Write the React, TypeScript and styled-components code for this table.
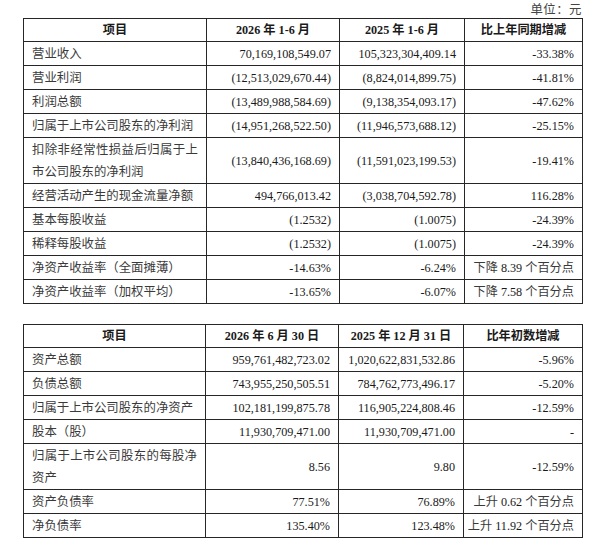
import React from "react";
import styled, { createGlobalStyle } from "styled-components";

const Global = createGlobalStyle`
  html, body { margin: 0; padding: 0; background: #ffffff; }
  body { font-family: "Liberation Serif", "Noto Sans CJK SC", serif; color: #1a1a1a; }
`;

const Page = styled.div`
  width: 600px;
  box-sizing: border-box;
  padding: 2px 18px 0 23px;
  display: flex;
  flex-direction: column;
`;

const Unit = styled.div`
  text-align: right;
  font-size: 12.4px;
  line-height: 16px;
  color: #444;
  letter-spacing: 0.5px;
`;

const Table = styled.table<{ $gap?: number }>`
  width: 559px;
  border-collapse: collapse;
  table-layout: fixed;
  margin-top: ${(p) => p.$gap ?? 0}px;
  font-size: 12.2px;
`;

const Th = styled.th`
  border: 1px solid #262626;
  padding: 1px 4px 0;
  line-height: 21px;
  font-weight: bold;
  text-align: center;
  color: #1a1a1a;
  white-space: nowrap;
`;

const Label = styled.td`
  border: 1px solid #262626;
  padding: 1px 8px 0;
  line-height: 22px;
  font-size: 12.4px;
  text-align: justify;
  color: #3a3a3a;
`;

const Num = styled.td<{ $tight?: boolean }>`
  border: 1px solid #262626;
  padding: 1px 8px 0 ${(p) => (p.$tight ? 2 : 4)}px;
  line-height: 22px;
  text-align: right;
  white-space: nowrap;
  color: #1a1a1a;
`;

const Cjk = styled.span`
  color: #3a3a3a;
`;

type Row = [string, string, string, string];

const incomeRows: Row[] = [
  ["营业收入", "70,169,108,549.07", "105,323,304,409.14", "-33.38%"],
  ["营业利润", "(12,513,029,670.44)", "(8,824,014,899.75)", "-41.81%"],
  ["利润总额", "(13,489,988,584.69)", "(9,138,354,093.17)", "-47.62%"],
  ["归属于上市公司股东的净利润", "(14,951,268,522.50)", "(11,946,573,688.12)", "-25.15%"],
  ["扣除非经常性损益后归属于上市公司股东的净利润", "(13,840,436,168.69)", "(11,591,023,199.53)", "-19.41%"],
  ["经营活动产生的现金流量净额", "494,766,013.42", "(3,038,704,592.78)", "116.28%"],
  ["基本每股收益", "(1.2532)", "(1.0075)", "-24.39%"],
  ["稀释每股收益", "(1.2532)", "(1.0075)", "-24.39%"],
  ["净资产收益率（全面摊薄）", "-14.63%", "-6.24%", "下降 8.39 个百分点"],
  ["净资产收益率（加权平均）", "-13.65%", "-6.07%", "下降 7.58 个百分点"],
];

const balanceRows: Row[] = [
  ["资产总额", "959,761,482,723.02", "1,020,622,831,532.86", "-5.96%"],
  ["负债总额", "743,955,250,505.51", "784,762,773,496.17", "-5.20%"],
  ["归属于上市公司股东的净资产", "102,181,199,875.78", "116,905,224,808.46", "-12.59%"],
  ["股本（股）", "11,930,709,471.00", "11,930,709,471.00", "-"],
  ["归属于上市公司股东的每股净资产", "8.56", "9.80", "-12.59%"],
  ["资产负债率", "77.51%", "76.89%", "上升 0.62 个百分点"],
  ["净负债率", "135.40%", "123.48%", "上升 11.92 个百分点"],
];

// Render a change value, greying the CJK parts like the reference
function Change({ text }: { text: string }) {
  const m = text.match(/^(\S+) ([\d.]+) (\S+)$/);
  if (!m) return <>{text}</>;
  return (
    <>
      <Cjk>{m[1]}</Cjk> {m[2]} <Cjk>{m[3]}</Cjk>
    </>
  );
}

function DataTable({
  widths,
  heads,
  rows,
  gap,
}: {
  widths: number[];
  heads: string[];
  rows: Row[];
  gap?: number;
}) {
  return (
    <Table $gap={gap}>
      <colgroup>
        {widths.map((w, i) => (
          <col key={i} style={{ width: w }} />
        ))}
      </colgroup>
      <thead>
        <tr>
          {heads.map((h) => (
            <Th key={h}>{h}</Th>
          ))}
        </tr>
      </thead>
      <tbody>
        {rows.map((r) => (
          <tr key={r[0]}>
            <Label>{r[0]}</Label>
            <Num>{r[1]}</Num>
            <Num>{r[2]}</Num>
            <Num $tight>
              <Change text={r[3]} />
            </Num>
          </tr>
        ))}
      </tbody>
    </Table>
  );
}

export default function App() {
  return (
    <>
      <Global />
      <Page>
        <Unit>单位：元</Unit>
        <DataTable
          widths={[183, 133, 125, 118]}
          heads={["项目", "2026 年 1-6 月", "2025 年 1-6 月", "比上年同期增减"]}
          rows={incomeRows}
        />
        <DataTable
          gap={20}
          widths={[182, 133, 125, 119]}
          heads={["项目", "2026 年 6 月 30 日", "2025 年 12 月 31 日", "比年初数增减"]}
          rows={balanceRows}
        />
      </Page>
    </>
  );
}
